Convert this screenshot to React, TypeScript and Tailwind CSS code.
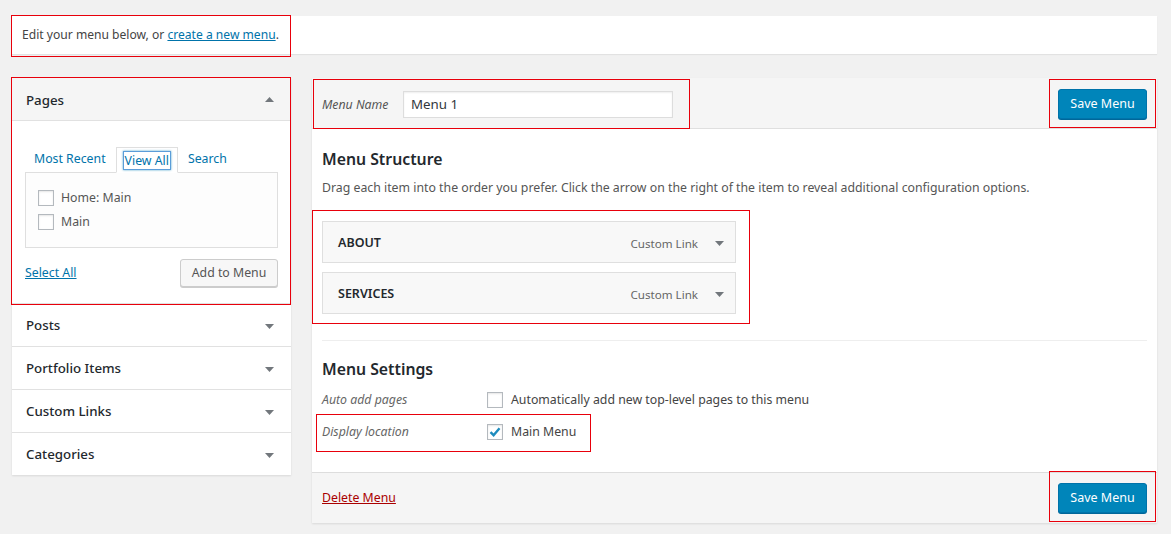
import React from "react";

const Tri = ({ up = false }: { up?: boolean }) => (
  <svg width="9" height="5" viewBox="0 0 9 5" className="block">
    {up ? <polygon points="0,5 9,5 4.5,0" fill="#72777c" /> : <polygon points="0,0 9,0 4.5,5" fill="#72777c" />}
  </svg>
);

const Check = ({ checked = false }: { checked?: boolean }) => (
  <span className="relative inline-flex w-[16px] h-[16px] shrink-0 border border-[#b4b9be] bg-white shadow-[inset_0_1px_2px_rgba(0,0,0,0.1)] items-center justify-center">
    {checked && (
      <svg width="14" height="14" viewBox="0 0 14 14">
        <path d="M2.5 7.2 L5.6 10.2 L11.5 3.2" stroke="#1e8cbe" strokeWidth="2.4" fill="none" />
      </svg>
    )}
  </span>
);

const SaveBtn = () => (
  <button className="w-[89px] h-[30px] bg-[#0085ba] border border-[#0073aa] rounded-[3px] shadow-[0_1px_0_#006799] text-white text-[12.5px] leading-none">
    Save Menu
  </button>
);

const Row = ({ title }: { title: string }) => (
  <div className="h-[43px] border-t border-[#e1e1e1] flex items-center justify-between pl-[14px] pr-[17px] pt-[2px] bg-white">
    <span className="text-[13.3px] text-[#23282d] font-medium">{title}</span>
    <Tri />
  </div>
);

const Item = ({ title }: { title: string }) => (
  <div className="w-[414px] h-[42px] border border-[#dfdfdf] bg-[#f8f8f8] flex items-center pl-[15px] pr-[11px] pt-[2px]">
    <span className="text-[12.5px] font-semibold text-[#23282d] flex-1">{title}</span>
    <span className="text-[11.6px] text-[#666]">Custom Link</span>
    <span className="ml-[17px]"><Tri /></span>
  </div>
);

const Anno = ({ l, t, w, h }: { l: number; t: number; w: number; h: number }) => (
  <div className="absolute border border-[#e8000b] pointer-events-none" style={{ left: l, top: t, width: w, height: h }} />
);

export default function App() {
  return (
    <div
      className="relative w-[1171px] h-[534px] bg-[#f1f1f1] overflow-hidden text-[#444]"
      style={{ fontFamily: '"Noto Sans", "Open Sans", sans-serif' }}
    >
      <div className="pl-[12px] pt-[16px] pr-[14px]">
        <div className="h-[38px] bg-white shadow-[0_1px_1px_rgba(0,0,0,0.06)] flex items-center pl-[10px] text-[12.1px] text-[#444]">
          Edit your menu below, or&nbsp;<a className="text-[#0073aa] underline">create a new menu</a>.
        </div>

        <div className="flex gap-[21px] mt-[24px] items-start">
          {/* Left column */}
          <div className="w-[279px] bg-white shadow-[0_1px_2px_rgba(0,0,0,0.1)]">
            <div className="h-[43px] bg-[#f5f5f5] border-b border-[#e1e1e1] flex items-center justify-between pl-[14px] pr-[17px] pt-[3px]">
              <span className="text-[13.3px] text-[#23282d] font-medium">Pages</span>
              <span className="-mt-[3px]"><Tri up /></span>
            </div>
            <div className="pt-[25px] px-[13px] pb-[18px] h-[182px]">
              <div className="flex items-end text-[12.3px] h-[26px]">
                <span className="text-[#0073aa] pl-[9px] pr-[10px] pb-[4px]">Most Recent</span>
                <span className="border border-[#dfdfdf] border-b-white bg-white h-[26px] px-[6px] flex items-center -mb-px relative z-10">
                  <span className="border border-[#5b9dd9] px-[1px] leading-[17px] text-[#0073aa] shadow-[0_0_2px_rgba(30,140,190,0.8)]">View All</span>
                </span>
                <span className="text-[#0073aa] px-[10px] pb-[4px]">Search</span>
              </div>
              <div className="border border-[#dfdfdf] bg-[#fdfdfd] h-[76px] pl-[12px] pt-[17px] flex flex-col gap-[8px] text-[12.3px] text-[#555]">
                <label className="flex items-center gap-[7px] h-[16px]"><Check />Home: Main</label>
                <label className="flex items-center gap-[7px] h-[16px]"><Check />Main</label>
              </div>
              <div className="flex items-center justify-between mt-[11px]">
                <a className="text-[12.3px] text-[#0073aa] underline">Select All</a>
                <button className="w-[98px] h-[28px] bg-[#f7f7f7] border border-[#cccccc] rounded-[3px] shadow-[0_1px_0_#cccccc] text-[12.3px] text-[#555]">Add to Menu</button>
              </div>
            </div>
            <Row title="Posts" />
            <Row title="Portfolio Items" />
            <Row title="Custom Links" />
            <Row title="Categories" />
          </div>

          {/* Right column */}
          <div className="flex-1 bg-white shadow-[0_1px_2px_rgba(0,0,0,0.1)]">
            <div className="h-[51px] bg-[#f5f5f5] border-b border-[#dfdfdf] flex items-center pl-[10px] pr-[10px] pt-[2px]">
              <span className="italic text-[12.3px] text-[#555] w-[81px] pt-[3px]">Menu Name</span>
              <div className="w-[270px] h-[27px] bg-white border border-[#dddddd] shadow-[inset_0_1px_2px_rgba(0,0,0,0.07)] flex items-center pl-[7px] pt-[2px] text-[13.3px] text-[#32373c]">Menu 1</div>
              <div className="flex-1" />
              <SaveBtn />
            </div>
            <div className="px-[10px] pt-[17px] pb-[20px] h-[343px]">
              <h3 className="text-[15.8px] font-semibold text-[#23282d] leading-[26px]">Menu Structure</h3>
              <p className="text-[12.3px] text-[#555] mt-[7px]">Drag each item into the order you prefer. Click the arrow on the right of the item to reveal additional configuration options.</p>
              <div className="flex flex-col gap-[9px] mt-[24px]">
                <Item title="ABOUT" />
                <Item title="SERVICES" />
              </div>
              <div className="border-t border-[#eeeeee] mt-[26px]" />
              <h3 className="text-[15.8px] font-semibold text-[#23282d] leading-[26px] mt-[15px]">Menu Settings</h3>
              <div className="flex items-center mt-[8px] h-[20px]">
                <span className="italic text-[12.3px] text-[#666] w-[165px]">Auto add pages</span>
                <label className="flex items-center gap-[8px] text-[12.3px] text-[#444]"><Check />Automatically add new top-level pages to this menu</label>
              </div>
              <div className="flex items-center mt-[12px] h-[20px]">
                <span className="italic text-[12.3px] text-[#666] w-[165px]">Display location</span>
                <label className="flex items-center gap-[8px] text-[12.3px] text-[#444]"><Check checked />Main Menu</label>
              </div>
            </div>
            <div className="h-[51px] bg-[#f5f5f5] border-t border-[#dddddd] flex items-center justify-between pl-[10px] pr-[10px]">
              <a className="text-[12.3px] text-[#a00] underline">Delete Menu</a>
              <SaveBtn />
            </div>
          </div>
        </div>
      </div>

      <Anno l={11} t={15} w={280} h={42} />
      <Anno l={11} t={77} w={280} h={228} />
      <Anno l={313} t={79} w={377} h={50} />
      <Anno l={1049} t={79} w={107} h={49} />
      <Anno l={312} t={210} w={438} h={114} />
      <Anno l={316} t={414} w={275} h={38} />
      <Anno l={1049} t={471} w={107} h={51} />
    </div>
  );
}
